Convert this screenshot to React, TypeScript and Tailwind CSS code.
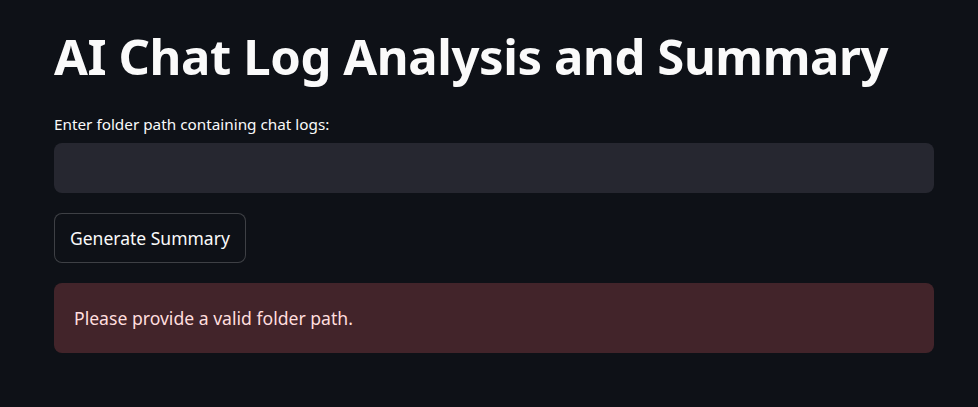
import { useState } from "react";

const App = () => {
  const [path, setPath] = useState("");

  return (
    <div
      className="min-h-screen w-full bg-[#0e1117] text-[#fafafa]"
      style={{ fontFamily: '"Noto Sans", "Open Sans", sans-serif' }}
    >
      <div className="flex flex-col px-[54px] pt-[22px] pr-[44px]">
        <h1 className="text-[49px] font-bold leading-[68px] tracking-[-0.4px]">
          AI Chat Log Analysis and Summary
        </h1>
        <label className="mt-[24px] text-[15.3px] leading-[20px]">
          Enter folder path containing chat logs:
        </label>
        <input
          value={path}
          onChange={(e) => setPath(e.target.value)}
          className="mt-[9px] h-[50px] w-full rounded-[8px] bg-[#262730] px-4 text-[17.5px] outline-none"
        />
        <div className="mt-[20px]">
          <button className="h-[50px] rounded-[8px] border border-[#ffffff33] bg-[#0e1117] px-[15px] text-[17.5px]">
            Generate Summary
          </button>
        </div>
        <div className="mt-[20px] flex h-[70px] items-center rounded-[8px] bg-[#42242a] px-[20px] text-[17.6px] text-[#ffdede]">
          Please provide a valid folder path.
        </div>
      </div>
    </div>
  );
};

export default App;
